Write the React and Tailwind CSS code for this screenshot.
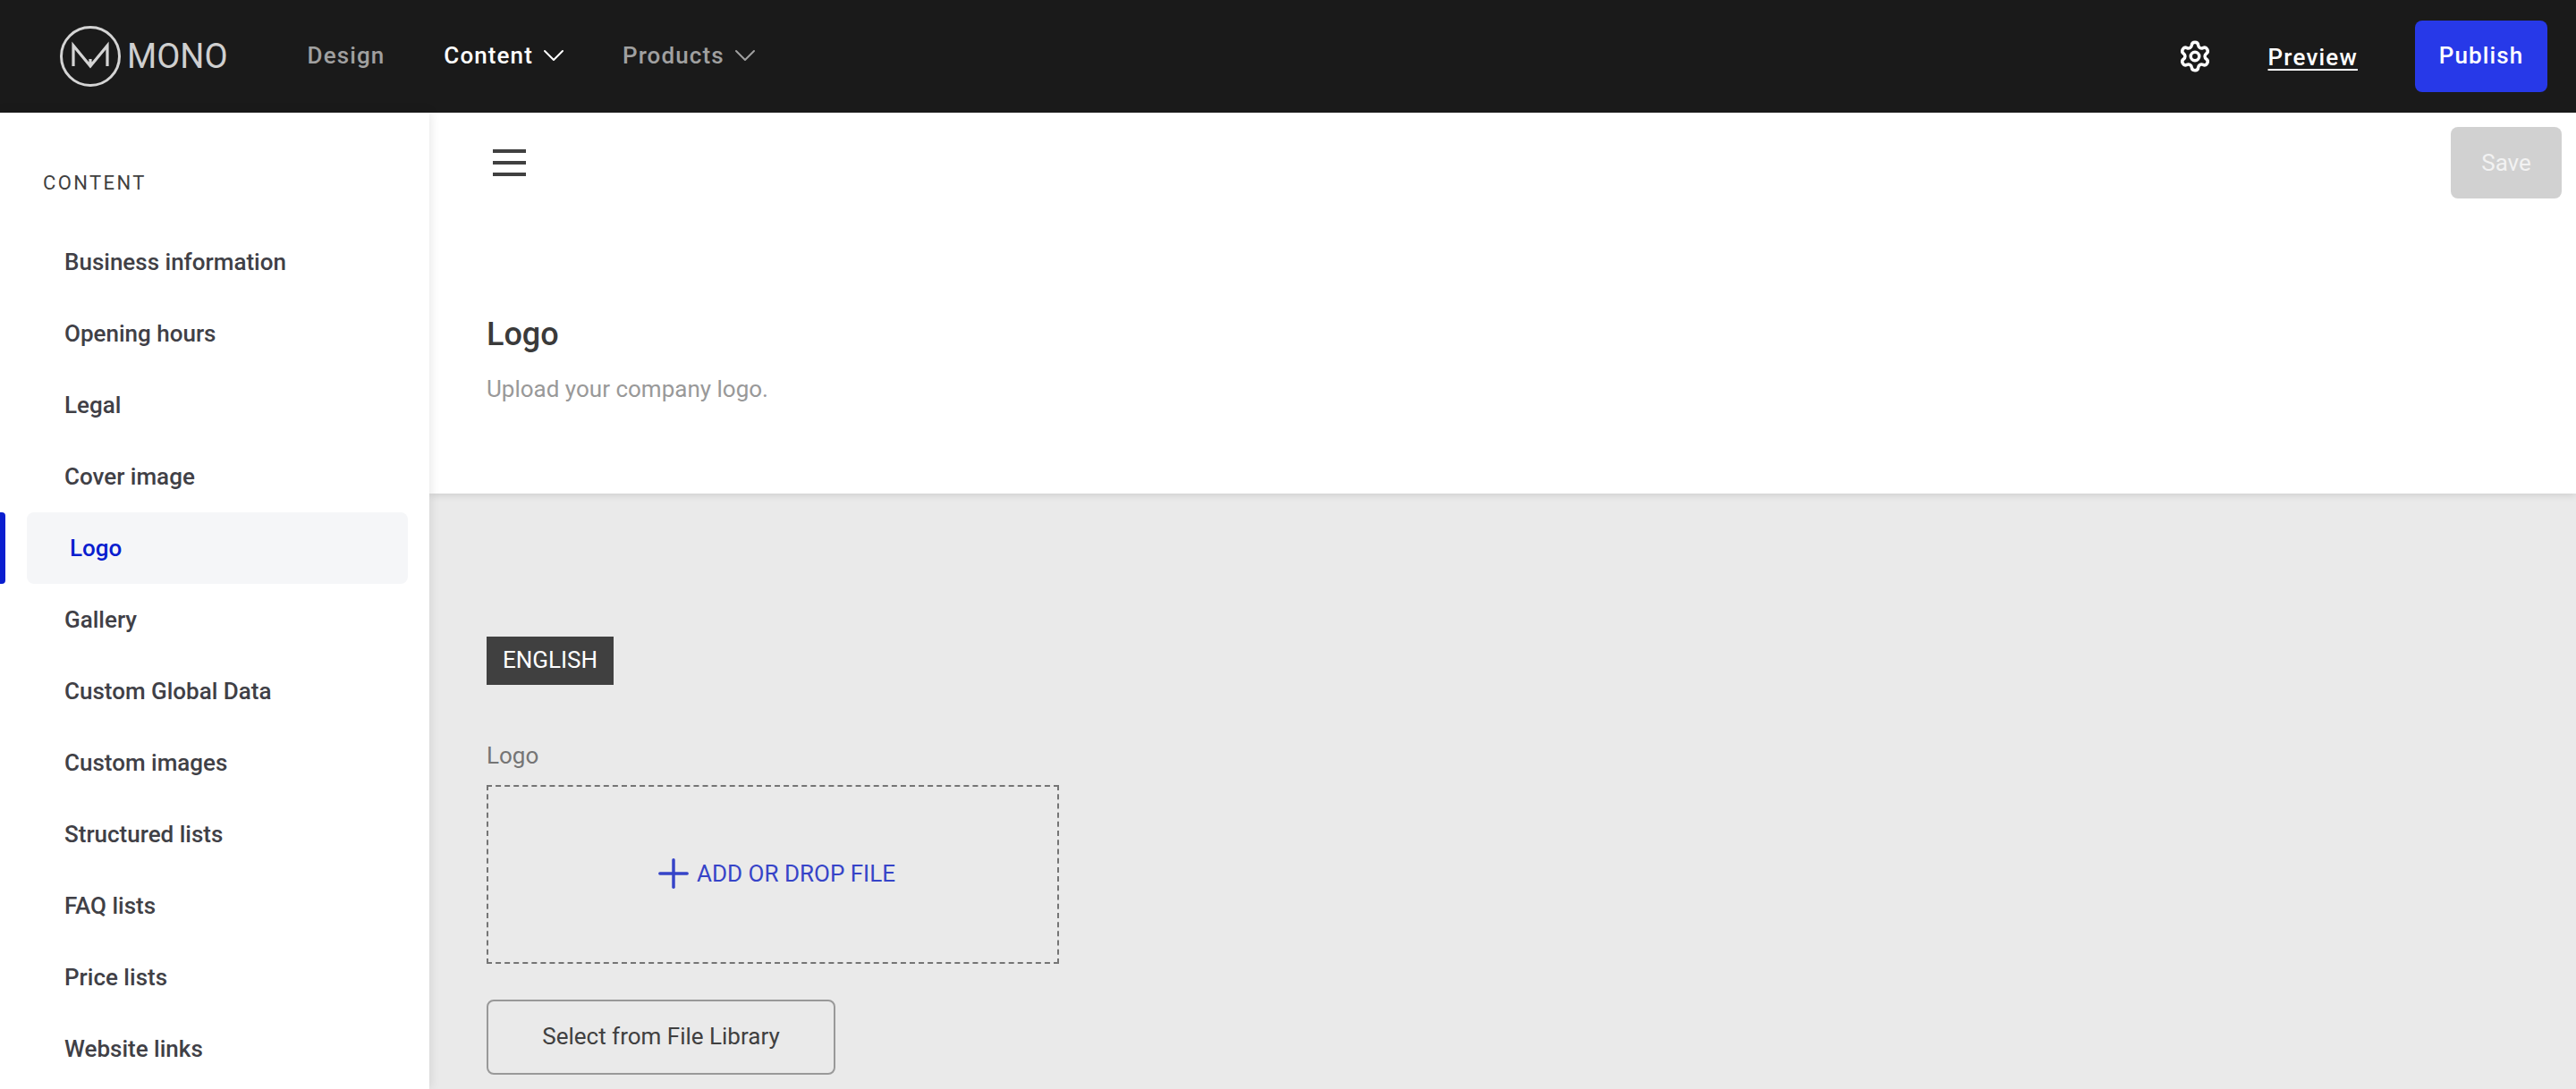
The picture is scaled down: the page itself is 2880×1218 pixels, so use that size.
import { ChevronDown, Settings, Plus } from "lucide-react";

const items = [
  "Business information",
  "Opening hours",
  "Legal",
  "Cover image",
  "Logo",
  "Gallery",
  "Custom Global Data",
  "Custom images",
  "Structured lists",
  "FAQ lists",
  "Price lists",
  "Website links",
];

const MonoLogo = () => (
  <div className="flex items-center">
    <svg width="70" height="70" viewBox="0 0 70 70" fill="none" stroke="#d4d4d4" className="shrink-0">
      <circle cx="35" cy="35" r="32.5" strokeWidth="3" />
      <path d="M16 46V23L35 46L54 23V46M35 46V38" strokeWidth="3.2" />
    </svg>
    <span className="ml-[6px] text-[38px] leading-none font-normal text-[#cfcfcf]">MONO</span>
  </div>
);

const App = () => {
  return (
    <div className="h-screen overflow-hidden flex flex-col font-['Roboto',sans-serif] bg-white">
      {/* Top bar */}
      <header className="h-[126px] shrink-0 bg-[#1a1a1a] flex items-center pl-[66px] pr-[32px]">
        <MonoLogo />
        <nav className="ml-[89px] flex items-center text-[26px] font-medium tracking-[1.1px] -mt-[2px]">
          <span className="text-[#a0a0a0]">Design</span>
          <span className="ml-[66px] text-white">Content</span>
          <ChevronDown size={40} strokeWidth={1.2} className="ml-[3px] text-white" />
          <span className="ml-[57px] text-[#a0a0a0]">Products</span>
          <ChevronDown size={40} strokeWidth={1.2} className="ml-[3px] text-[#a0a0a0]" />
        </nav>
        <div className="ml-auto flex items-center">
          <Settings size={38} strokeWidth={2.2} className="text-white" />
          <span className="ml-[63px] text-[26px] font-medium tracking-[1.2px] text-white underline underline-offset-4 mt-[2px]">
            Preview
          </span>
          <button className="ml-[64px] w-[148px] h-[80px] pb-[2px] rounded-[8px] bg-[#2739e8] text-white text-[26px] font-medium tracking-[1.1px]">
            Publish
          </button>
        </div>
      </header>

      <div className="flex flex-1 min-h-0">
        {/* Sidebar */}
        <aside className="w-[480px] shrink-0 bg-white shadow-[0_0_12px_rgba(0,0,0,0.12)] z-10 overflow-hidden">
          <div className="pl-[48px] pt-[66px] h-[127px] text-[22px] leading-[26px] font-normal tracking-[2.4px] text-[#404040]">
            CONTENT
          </div>
          <ul>
            {items.map((item) =>
              item === "Logo" ? (
                <li key={item} className="relative h-[80px] ml-[30px] mr-[24px] rounded-[8px] bg-[#f5f6f8] flex items-center pl-[48px] text-[26px] font-medium text-[#0a1ecf]">
                  <span className="absolute left-[-30px] top-0 w-[6px] h-[80px] rounded-r-[4px] bg-[#0a1ecf]" />
                  {item}
                </li>
              ) : (
                <li key={item} className="h-[80px] flex items-center pl-[72px] text-[26px] font-medium text-[#404046]">
                  {item}
                </li>
              )
            )}
          </ul>
        </aside>

        {/* Main */}
        <main className="flex-1 min-w-0 bg-[#eaeaea] overflow-hidden">
          <section className="h-[426px] bg-white shadow-[0_2px_8px_rgba(0,0,0,0.12)] pl-[64px]">
            <div className="h-[112px] flex items-center justify-between pr-[16px]">
              <svg width="37" height="30" viewBox="0 0 37 30" fill="#404040" className="ml-[7px]">
                <rect y="0" width="37" height="4" />
                <rect y="13" width="37" height="4" />
                <rect y="26" width="37" height="4" />
              </svg>
              <button className="w-[124px] h-[80px] rounded-[8px] bg-[#d1d1d1] text-[#f2f2f2] text-[26px]">
                Save
              </button>
            </div>
            <h1 className="mt-[114px] text-[36px] leading-[44px] font-medium text-[#3a3a3a]">Logo</h1>
            <p className="mt-[23px] text-[26px] leading-[32px] text-[#999999]">Upload your company logo.</p>
          </section>

          <section className="pl-[64px] pt-[160px]">
            <div className="w-[142px] h-[54px] pb-[2px] bg-[#404040] text-white text-[26px] flex items-center justify-center">
              ENGLISH
            </div>
            <label className="block mt-[63px] text-[26px] leading-[32px] text-[#757575]">Logo</label>
            <div className="mt-[17px] w-[640px] h-[200px] pb-[2px] border-2 border-dashed border-[#757575] flex items-center justify-center text-[#3644c8] text-[26px]">
              <Plus size={52} strokeWidth={1.6} />
              ADD OR DROP FILE
            </div>
            <button className="mt-[40px] w-[390px] h-[84px] pb-[2px] rounded-[8px] border-2 border-[#999999] text-[26px] text-[#404040]">
              Select from File Library
            </button>
          </section>
        </main>
      </div>
    </div>
  );
};

export default App;
